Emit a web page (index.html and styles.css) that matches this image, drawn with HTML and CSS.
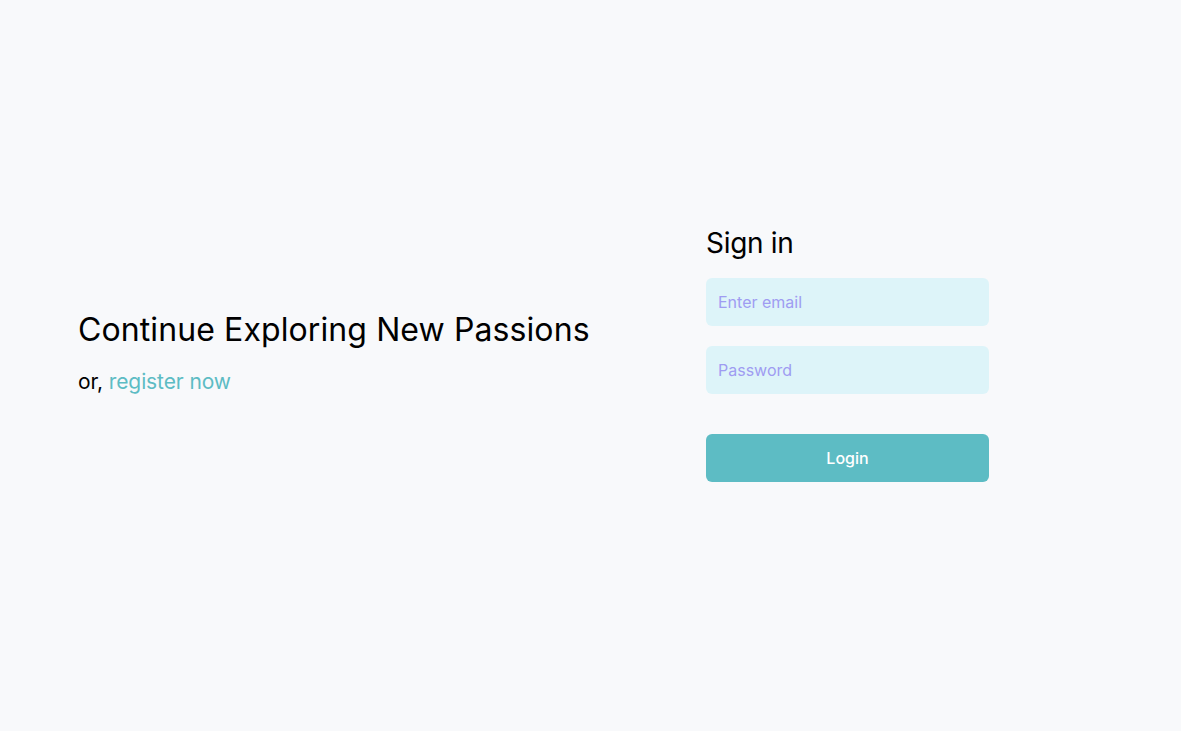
FILE: index.html
```html
<!DOCTYPE html>
<html lang="en">
<head>
<meta charset="utf-8">
<title>Sign in</title>
<link rel="stylesheet" href="styles.css">
</head>
<body>
<main class="page">
  <section class="intro">
    <h1 class="intro-title">Continue Exploring New Passions</h1>
    <p class="intro-sub">or, <a class="intro-link" href="#">register now</a></p>
  </section>
  <section class="signin">
    <h2 class="signin-title">Sign in</h2>
    <form class="signin-form">
      <input class="field" type="email" placeholder="Enter email">
      <input class="field" type="password" placeholder="Password">
      <button class="login" type="button">Login</button>
    </form>
  </section>
</main>
</body>
</html>
```
FILE: styles.css
```css
* { box-sizing: border-box; }
html, body { margin: 0; height: 100%; }
body {
  background: #f8f9fb;
  font-family: Inter, "Noto Sans", sans-serif;
  color: #000;
}
.page {
  height: 100%;
  display: flex;
  align-items: center;
  padding: 0 0 24px 78px;
}
.intro {
  width: 628px;
  padding-bottom: 2px;
}
.intro-title {
  margin: 0;
  font-size: 32px;
  font-weight: 400;
  line-height: 40px;
  letter-spacing: 0.1px;
}
.intro-sub {
  margin: 18px 0 0;
  font-size: 21px;
  line-height: 28px;
  letter-spacing: -0.1px;
}
.intro-link {
  color: #5dbcc4;
  text-decoration: none;
}
.signin { width: 283px; }
.signin-title {
  margin: 0 0 17px;
  font-size: 28px;
  font-weight: 400;
  line-height: 36px;
  letter-spacing: -0.3px;
}
.signin-form {
  display: flex;
  flex-direction: column;
  gap: 20px;
}
.field {
  height: 48px;
  border: none;
  border-radius: 6px;
  background: #ddf4f9;
  padding: 0 12px;
  font-family: inherit;
  font-size: 16px;
  outline: none;
}
.field::placeholder { color: #9f9cf2; }
.login {
  margin-top: 20px;
  height: 48px;
  border: none;
  border-radius: 6px;
  background: #5dbcc4;
  color: #fff;
  font-family: inherit;
  font-size: 16px;
  font-weight: 500;
}
```
